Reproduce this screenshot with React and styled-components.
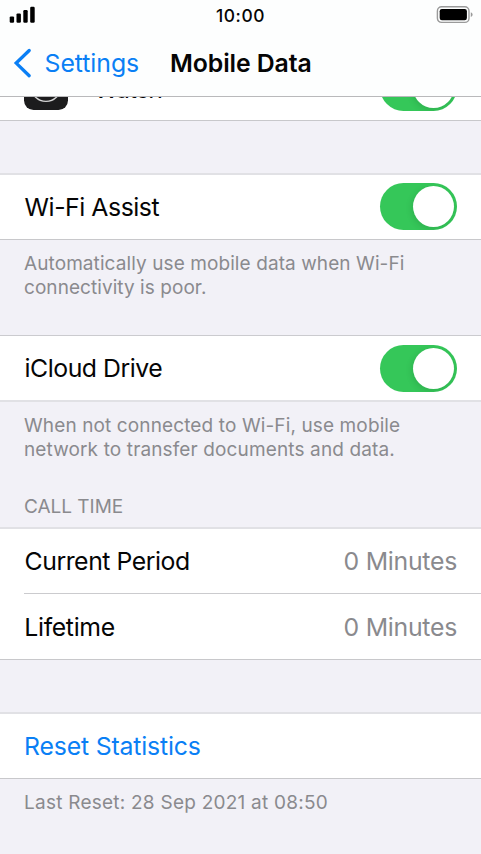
import React from "react";
import styled, { createGlobalStyle } from "styled-components";

const GlobalStyle = createGlobalStyle`
  * { box-sizing: border-box; }
  body {
    margin: 0;
    background: #f2f1f7;
    font-family: Inter, "Liberation Sans", sans-serif;
    overflow: hidden;
  }
`;

const Screen = styled.main`
  display: flex;
  flex-direction: column;
  width: 100%;
  height: 100vh;
  overflow: hidden;
  background: #f2f1f7;
  color: #050505;
`;

const Header = styled.header`
  flex: none;
  height: 97px;
  background: #fdfefe;
  border-bottom: 1px solid #b9b9bb;
`;

const StatusBar = styled.div`
  display: grid;
  grid-template-columns: 1fr auto 1fr;
  align-items: center;
  height: 31px;
  padding: 0 9px 0 9px;
`;

const Clock = styled.time`
  font-size: 17.4px;
  font-weight: 500;
  line-height: 31px;
  letter-spacing: 0.6px;
`;

const BatterySlot = styled.div`
  display: flex;
  justify-content: flex-end;
  margin-right: -1px;
`;

const NavBar = styled.nav`
  display: flex;
  align-items: center;
  height: 64px;
  padding-left: 12px;
`;

const BackLink = styled.a`
  display: flex;
  align-items: center;
  width: 158px;
  gap: 12.6px;
  color: #0a7ff5;
  font-size: 24.8px;
  letter-spacing: -0.06px;
`;

const Title = styled.h1`
  margin: 0;
  font-size: 24.8px;
  font-weight: 600;
  letter-spacing: -0.08px;
  white-space: nowrap;
`;

const Content = styled.div`
  flex: 1;
  min-height: 0;
  overflow: hidden;
`;

const Group = styled.section`
  background: #fff;
  margin-top: ${(p) => p.$gap}px;
  border-top: ${(p) => (p.$softTop ? "2px solid #e1e1e5" : "1px solid #cbcbcf")};
  border-bottom: ${(p) => (p.$softBottom ? "2px solid #e1e1e5" : "1px solid #c8c8cb")};
`;

const Row = styled.div`
  display: flex;
  align-items: center;
  justify-content: space-between;
  height: ${(p) => p.$height || 64}px;
  padding: 0 24px;
`;

const Divider = styled.hr`
  height: 1px;
  margin: 0 0 0 24px;
  border: 0;
  background: #cbcbce;
`;

const Label = styled.span`
  font-size: 24.8px;
  line-height: 30px;
  white-space: nowrap;
  padding-left: ${(p) => p.$inset || 0}px;
  letter-spacing: ${(p) => p.$track || 0}px;
`;

const AppLabel = styled.div`
  display: flex;
  align-items: center;
  gap: 26px;
`;

const AppName = styled(Label)`
  padding-top: 2px;
`;

const Value = styled(Label)`
  color: #8a8a8e;
`;

const Action = styled(Label)`
  color: #0a7ff5;
`;

const Note = styled.p`
  margin: ${(p) => p.$top}px 24px 0;
  color: #8a8a8e;
  font-size: 19px;
  font-weight: 400;
  line-height: 24px;
`;

const NoteLine = styled.span`
  display: block;
  white-space: nowrap;
  letter-spacing: ${(p) => p.$track}px;
`;

const Track = styled.span`
  display: flex;
  justify-content: flex-end;
  flex: none;
  width: 77px;
  height: 47px;
  margin-top: ${(p) => p.$lift || 0}px;
  padding: 3px;
  border-radius: 24px;
  background: #35c759;
  overflow: hidden;
`;

const Knob = styled.span`
  width: 41px;
  height: 41px;
  border-radius: 50%;
  background: #fff;
  box-shadow: -1px 2px 7px rgba(0, 0, 0, 0.12);
`;

function Switch({ lift }) {
  return (
    <Track role="switch" aria-checked="true" $lift={lift}>
      <Knob />
    </Track>
  );
}

function Signal() {
  return (
    <svg width="27" height="31" viewBox="0 0 27 31">
      <rect x="0.7" y="16.4" width="4.4" height="6.3" rx="1.2" />
      <rect x="7.5" y="13.4" width="4.4" height="9.3" rx="1.2" />
      <rect x="14.3" y="10" width="4.4" height="12.7" rx="1.2" />
      <rect x="21.2" y="6.8" width="4.5" height="15.9" rx="1.2" />
    </svg>
  );
}

function Battery() {
  return (
    <svg width="37" height="31" viewBox="0 0 37 31">
      <rect x="1.4" y="6.7" width="31.6" height="15.7" rx="4.2" fill="none" stroke="#9a9a9a" strokeWidth="1.4" />
      <rect x="3.7" y="9" width="27.2" height="11.2" rx="2.2" />
      <path d="M34.8 12.2 C37.2 13 37.2 16.2 34.8 17 Z" fill="#9a9a9a" />
    </svg>
  );
}

function BackArrow() {
  return (
    <svg width="20" height="32" viewBox="0 0 20 32" fill="none">
      <path d="M17.2 3.5 L4.2 16.1 L17.2 28.7" stroke="#0a7ff5" strokeWidth="3.3" strokeLinecap="round" strokeLinejoin="miter" />
    </svg>
  );
}

function WatchIcon() {
  return (
    <svg width="44" height="44" viewBox="0 0 44 44">
      <rect width="44" height="44" rx="9.5" fill="#1c1c1d" />
      <circle cx="22" cy="20.4" r="15" fill="none" stroke="#d4d4d4" strokeWidth="1.4" />
    </svg>
  );
}

export default function App() {
  return (
    <Screen>
      <GlobalStyle />
      <Header>
        <StatusBar>
          <Signal />
          <Clock>10:00</Clock>
          <BatterySlot>
            <Battery />
          </BatterySlot>
        </StatusBar>
        <NavBar>
          <BackLink>
            <BackArrow />
            Settings
          </BackLink>
          <Title>Mobile Data</Title>
        </NavBar>
      </Header>
      <Content>
        <Group $gap={-43}>
          <Row $height={65}>
            <AppLabel>
              <WatchIcon />
              <AppName $track={-1.2}>Watch</AppName>
            </AppLabel>
            <Switch />
          </Row>
        </Group>

        <Group $gap={52} $softTop>
          <Row>
            <Label $inset={0.6} $track={-0.45}>Wi-Fi Assist</Label>
            <Switch lift={-2} />
          </Row>
        </Group>
        <Note $top={12}>
          <NoteLine $track={0.09}>Automatically use mobile data when Wi-Fi</NoteLine>
          <NoteLine $track={0.06}>connectivity is poor.</NoteLine>
        </Note>

        <Group $gap={35} $softBottom>
          <Row $height={64}>
            <Label $inset={0.5} $track={-0.46}>iCloud Drive</Label>
            <Switch />
          </Row>
        </Group>
        <Note $top={12}>
          <NoteLine $track={0.12}>When not connected to Wi-Fi, use mobile</NoteLine>
          <NoteLine $track={0.13}>network to transfer documents and data.</NoteLine>
        </Note>

        <Note as="h2" $top={33}>
          <NoteLine $track={-0.02}>CALL TIME</NoteLine>
        </Note>
        <Group $gap={8} $softTop>
          <Row>
            <Label $inset={0.5} $track={-0.45}>Current Period</Label>
            <Value $track={-0.26}>0 Minutes</Value>
          </Row>
          <Divider />
          <Row $height={65}>
            <Label $inset={0.3} $track={-0.34}>Lifetime</Label>
            <Value $track={-0.26}>0 Minutes</Value>
          </Row>
        </Group>

        <Group $gap={52} $softTop>
          <Row>
            <Action $track={-0.16}>Reset Statistics</Action>
          </Row>
        </Group>
        <Note $top={12}>
          <NoteLine $track={0.24}>Last Reset: 28 Sep 2021 at 08:50</NoteLine>
        </Note>
      </Content>
    </Screen>
  );
}
